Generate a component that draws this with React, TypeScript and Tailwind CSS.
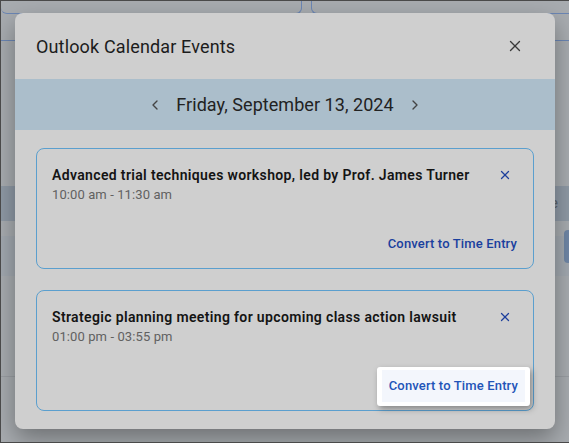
import { ChevronLeft, ChevronRight, X } from "lucide-react";

const events = [
  {
    id: "e1",
    title: "Advanced trial techniques workshop, led by Prof. James Turner",
    time: "10:00 am - 11:30 am",
    focused: false,
  },
  {
    id: "e2",
    title: "Strategic planning meeting for upcoming class action lawsuit",
    time: "01:00 pm - 03:55 pm",
    focused: true,
  },
];

// Dimmed page sitting behind the dialog.
function Backdrop() {
  return (
    <div className="flex h-full flex-col">
      <div className="flex h-[13px] gap-[9px]">
        <div className="h-[13px] w-[301px] rounded-b-[6px] border-b border-r border-[#6b86b4]" />
        <div className="h-[13px] flex-1 rounded-bl-[6px] border-b border-l border-[#6b86b4]" />
      </div>
      <div className="mt-[26px] border-b border-[#6b86b4]" />
      <div className="mt-[145px] flex h-[35px] items-center justify-end bg-[#8f9aa6] pr-[11px] text-[14px] text-[#5c636b]">
        e
      </div>
      <div className="mt-[15px] flex h-[40px] justify-end bg-[#a2a9b0]">
        <div className="mt-[-6px] h-[33px] w-[5px] rounded-l-[4px] bg-[#6f86a6]" />
      </div>
      <div className="mt-[100px] border-b border-[#9a9ea3]" />
    </div>
  );
}

export default function App() {
  return (
    <div
      className="relative h-[443px] w-[569px] overflow-hidden border-l border-t border-b border-[#4a4a4a] bg-[#a8acb0]"
      style={{ fontFamily: "Roboto, 'Noto Sans', sans-serif" }}
    >
      <Backdrop />

      <div className="absolute left-[14px] top-[12px] flex h-[416px] w-[540px] flex-col overflow-hidden rounded-[8px] bg-[#cfcfcf] shadow-[0_10px_24px_rgba(0,0,0,0.35)]">
        <div className="flex h-[66px] shrink-0 items-center justify-between pl-[21px] pr-[31px]">
          <h2 className="text-[18px] font-normal tracking-[0.15px] text-[#1c1c1c]">Outlook Calendar Events</h2>
          <button className="mt-[-1px] text-[#3a3a3a]">
            <X size={18} strokeWidth={1.8} />
          </button>
        </div>

        <div className="flex h-[51px] shrink-0 items-center justify-center gap-[13px] bg-[#abbecb] text-[18px] text-[#222]">
          <ChevronLeft size={16} strokeWidth={2} className="text-[#444]" />
          <span className="tracking-[0.05px]">Friday, September 13, 2024</span>
          <ChevronRight size={16} strokeWidth={2} className="text-[#444]" />
        </div>

        <div className="flex flex-col gap-[21px] px-[21px] pt-[18px]">
          {events.map((ev) => (
            <div
              key={ev.id}
              className="flex h-[121px] flex-col rounded-[8px] border border-[#5b9fce] pb-[8px] pl-[15px] pr-[14px] pt-[16px]"
            >
              <div className="flex items-start justify-between">
                <div>
                  <p className="text-[14px] font-semibold leading-[20px] tracking-[0.35px] text-[#141414]">
                    {ev.title}
                  </p>
                  <p className="mt-[1px] text-[13px] leading-[18px] tracking-[0.1px] text-[#616161]">{ev.time}</p>
                </div>
                <button className="mr-[7px] mt-[3px] text-[#1d3f9c]">
                  <X size={14} strokeWidth={2.2} />
                </button>
              </div>
              <div className="mt-auto flex justify-end">
                {ev.focused ? (
                  <button className="mb-[-4px] mr-[-11px] rounded-[3px] border-x-[5px] border-b-[4px] border-t-[3px] border-white bg-[#f3f6fc] px-[7px] py-[7px] text-[13px] font-medium leading-[18px] tracking-[0.15px] text-[#2254b8] shadow-[2px_3px_6px_rgba(0,0,0,0.35)]">
                    Convert to Time Entry
                  </button>
                ) : (
                  <button className="mb-[7px] mr-[2px] text-[13px] font-medium leading-[18px] tracking-[0.15px] text-[#1a3f9e]">
                    Convert to Time Entry
                  </button>
                )}
              </div>
            </div>
          ))}
        </div>
      </div>
    </div>
  );
}
